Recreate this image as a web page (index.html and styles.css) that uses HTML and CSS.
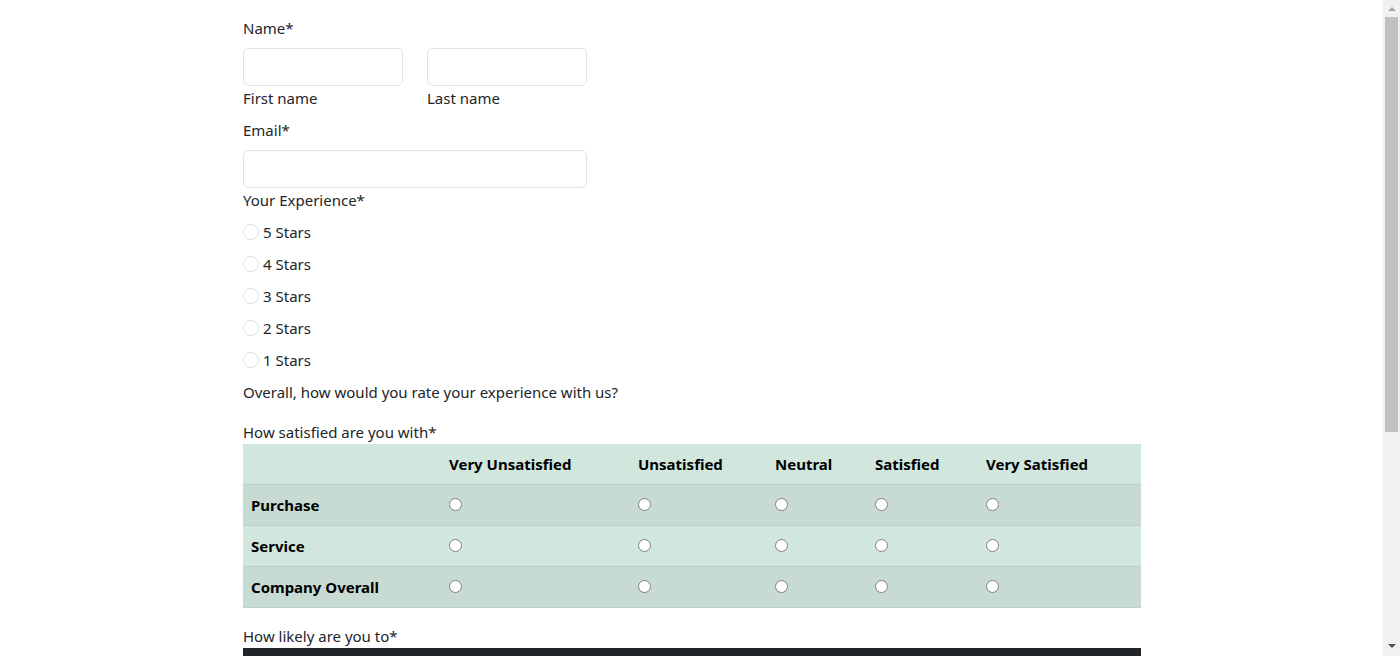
FILE: index.html
```html
<!DOCTYPE html>
<html lang="en">
<head>
<meta charset="utf-8">
<title>Survey</title>
<link rel="stylesheet" href="styles.css">
</head>
<body>
<form class="survey">
  <div class="label">Name*</div>
  <div class="name-row">
    <div class="field">
      <input class="input short" type="text">
      <div class="sub">First name</div>
    </div>
    <div class="field">
      <input class="input short" type="text">
      <div class="sub">Last name</div>
    </div>
  </div>
  <div class="label email-label">Email*</div>
  <input class="input wide" type="email">
  <div class="label">Your Experience*</div>
  <div class="stars">
    <label class="star"><input class="check" type="radio" name="exp"><span>5 Stars</span></label>
    <label class="star"><input class="check" type="radio" name="exp"><span>4 Stars</span></label>
    <label class="star"><input class="check" type="radio" name="exp"><span>3 Stars</span></label>
    <label class="star"><input class="check" type="radio" name="exp"><span>2 Stars</span></label>
    <label class="star"><input class="check" type="radio" name="exp"><span>1 Stars</span></label>
  </div>
  <div class="label question">Overall, how would you rate your experience with us?</div>
  <div class="label section">How satisfied are you with*</div>
  <table class="grid green">
    <colgroup>
      <col class="c1"><col class="c2"><col class="c3"><col class="c4"><col class="c5"><col class="c6">
    </colgroup>
    <thead>
      <tr><th></th><th>Very Unsatisfied</th><th>Unsatisfied</th><th>Neutral</th><th>Satisfied</th><th>Very Satisfied</th></tr>
    </thead>
    <tbody>
      <tr><th>Purchase</th><td><input class="dot" type="radio" name="p"></td><td><input class="dot" type="radio" name="p"></td><td><input class="dot" type="radio" name="p"></td><td><input class="dot" type="radio" name="p"></td><td><input class="dot" type="radio" name="p"></td></tr>
      <tr><th>Service</th><td><input class="dot" type="radio" name="s"></td><td><input class="dot" type="radio" name="s"></td><td><input class="dot" type="radio" name="s"></td><td><input class="dot" type="radio" name="s"></td><td><input class="dot" type="radio" name="s"></td></tr>
      <tr><th>Company Overall</th><td><input class="dot" type="radio" name="c"></td><td><input class="dot" type="radio" name="c"></td><td><input class="dot" type="radio" name="c"></td><td><input class="dot" type="radio" name="c"></td><td><input class="dot" type="radio" name="c"></td></tr>
    </tbody>
  </table>
  <div class="label section">How likely are you to*</div>
  <table class="grid dark">
    <colgroup>
      <col class="c1"><col class="c2"><col class="c3"><col class="c4"><col class="c5"><col class="c6">
    </colgroup>
    <thead>
      <tr class="dark-head"><th></th><th>Very Unlikely</th><th>Unlikely</th><th>Neutral</th><th>Likely</th><th>Very Likely</th></tr>
    </thead>
    <tbody>
      <tr><th>Buy again</th><td><input class="dot" type="radio" name="b"></td><td><input class="dot" type="radio" name="b"></td><td><input class="dot" type="radio" name="b"></td><td><input class="dot" type="radio" name="b"></td><td><input class="dot" type="radio" name="b"></td></tr>
      <tr><th>Recommend us</th><td><input class="dot" type="radio" name="r"></td><td><input class="dot" type="radio" name="r"></td><td><input class="dot" type="radio" name="r"></td><td><input class="dot" type="radio" name="r"></td><td><input class="dot" type="radio" name="r"></td></tr>
      <tr><th>Leave a review</th><td><input class="dot" type="radio" name="l"></td><td><input class="dot" type="radio" name="l"></td><td><input class="dot" type="radio" name="l"></td><td><input class="dot" type="radio" name="l"></td><td><input class="dot" type="radio" name="l"></td></tr>
    </tbody>
  </table>
  <div class="label section">Any other comments?</div>
  <textarea class="input comments"></textarea>
  <button class="submit" type="button">Submit</button>
</form>
<div class="scrollbar" aria-hidden="true">
  <div class="sb-btn sb-up"><span class="arrow-up"></span></div>
  <div class="sb-track"><div class="sb-thumb"></div></div>
  <div class="sb-btn sb-down"><span class="arrow-down"></span></div>
</div>
</body>
</html>
```
FILE: styles.css
```css
html {
  background: #fff;
}
body {
  margin: 0;
  padding: 0 16px 0 0;
  font-family: "Noto Sans", "Open Sans", sans-serif;
  font-size: 15px;
  line-height: 24px;
  color: #212529;
}
.survey {
  max-width: 898px;
  margin: 0 auto;
  padding: 16px 0 0;
  display: flex;
  flex-direction: column;
  align-items: flex-start;
}
.label {
  margin-bottom: 8px;
}
.name-row {
  display: flex;
  gap: 24px;
}
.field {
  display: flex;
  flex-direction: column;
}
.input {
  box-sizing: border-box;
  height: 38px;
  border: 1px solid #dee2e6;
  border-radius: 6px;
  background: #fff;
  margin: 0;
  padding: 6px 12px;
  font: inherit;
}
.short {
  width: 160px;
}
.wide {
  width: 344px;
}
.email-label {
  margin-top: 8px;
}
.stars {
  display: flex;
  flex-direction: column;
}
.star {
  display: flex;
  align-items: center;
  gap: 4px;
  margin-bottom: 8px;
}
.check {
  appearance: none;
  width: 16px;
  height: 16px;
  margin: 0;
  border: 1px solid #dee2e6;
  border-radius: 50%;
  background: #fff;
}
.question {
  margin-bottom: 16px;
}
.section {
  margin-bottom: 0;
}
.grid {
  width: 100%;
  border-collapse: collapse;
  table-layout: fixed;
  color: #000;
}
.grid th,
.grid td {
  padding: 8px;
  text-align: left;
  vertical-align: top;
  font-weight: normal;
  border-bottom: 1px solid #bcd0c7;
}
.grid th {
  font-weight: bold;
}
.c1 { width: 198px; }
.c2 { width: 189px; }
.c3 { width: 137px; }
.c4 { width: 100px; }
.c5 { width: 111px; }
.c6 { width: 163px; }
.green thead tr,
.green tbody tr:nth-child(even) {
  background: #d1e7dd;
}
.green tbody tr:nth-child(odd) {
  background: #c7dbd2;
}
.green {
  margin-bottom: 16px;
}
.dark {
  color: #fff;
  margin-bottom: 16px;
}
.dark th,
.dark td {
  border-bottom-color: #4d5154;
}
.dark thead tr,
.dark tbody tr:nth-child(even) {
  background: #212529;
}
.dark tbody tr:nth-child(odd) {
  background: #2c3034;
}
.dark-head th {
  padding-top: 16px;
  padding-bottom: 16px;
}
.dot {
  appearance: none;
  display: block;
  box-sizing: border-box;
  width: 13px;
  height: 13px;
  margin: 5px 0 6px;
  border: 1px solid #808080;
  border-radius: 50%;
  background: #fff;
}
.comments {
  width: 344px;
  height: 66px;
  resize: none;
  margin-top: 8px;
}
.submit {
  margin: 16px 0 24px;
  height: 38px;
  padding: 6px 12px;
  border: 1px solid #0d6efd;
  border-radius: 6px;
  background: #0d6efd;
  color: #fff;
  font: inherit;
}
.scrollbar {
  position: fixed;
  top: 0;
  right: 0;
  bottom: 0;
  width: 17px;
  background: #f1f1f1;
  display: flex;
  flex-direction: column;
}
.sb-btn {
  height: 17px;
  flex: none;
  box-sizing: border-box;
  padding-left: 5px;
}
.sb-up {
  padding-top: 7px;
}
.sb-down {
  padding-top: 5px;
}
.arrow-up,
.arrow-down {
  display: block;
  width: 0;
  height: 0;
  border-left: 4px solid transparent;
  border-right: 4px solid transparent;
}
.arrow-up {
  border-bottom: 4px solid #a3a3a3;
}
.arrow-down {
  border-top: 4px solid #505050;
}
.sb-track {
  flex: 1;
  padding: 0 2px;
}
.sb-thumb {
  height: 415px;
  background: #c1c1c1;
}
```
